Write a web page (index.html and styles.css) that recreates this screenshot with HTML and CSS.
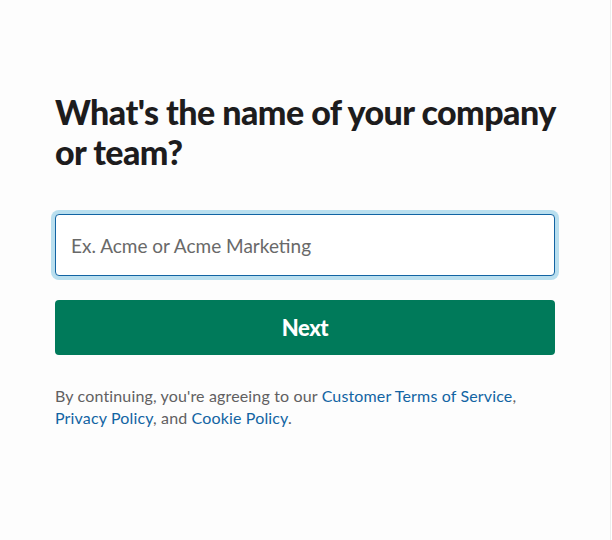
FILE: index.html
```html
<!DOCTYPE html>
<html lang="en">
<head>
<meta charset="utf-8">
<title>Create workspace</title>
<link rel="stylesheet" href="styles.css">
</head>
<body>
<div class="page">
  <main class="setup">
    <h1 class="title">What's the name of your company or team?</h1>
    <div class="field">
      <input class="name-input" type="text" placeholder="Ex. Acme or Acme Marketing">
    </div>
    <button class="next-btn" type="button">Next</button>
    <p class="legal">By continuing, you're agreeing to our <a href="#">Customer Terms of Service</a>, <a href="#">Privacy Policy</a>, and <a href="#">Cookie Policy</a>.</p>
  </main>
</div>
</body>
</html>
```
FILE: styles.css
```css
html, body {
  margin: 0;
  padding: 0;
  background: #ffffff;
}
body {
  font-family: Lato, "Liberation Sans", sans-serif;
  color: #1d1c1d;
}
.page {
  width: 611px;
  min-height: 540px;
  border-right: 1px solid #ececec;
  background: #fdfdfd;
  box-sizing: border-box;
}
.setup {
  width: 500px;
  padding: 92px 0 0 55px;
}
.title {
  margin: 0;
  font-size: 34px;
  line-height: 40px;
  font-weight: 900;
  letter-spacing: -0.55px;
  color: #1d1c1d;
}
.field {
  margin-top: 42px;
}
.name-input {
  display: block;
  box-sizing: border-box;
  width: 500px;
  height: 62px;
  margin: 0;
  padding: 0 15px;
  border: 1px solid #1264a3;
  border-radius: 4px;
  box-shadow: 0 0 0 4px rgba(29, 155, 209, 0.3);
  background: #fff;
  font-family: Lato, "Liberation Sans", sans-serif;
  font-size: 19px;
  color: #1d1c1d;
  outline: none;
}
.name-input::placeholder {
  color: #696969;
  opacity: 1;
}
.next-btn {
  display: block;
  width: 500px;
  height: 55px;
  margin-top: 24px;
  border: none;
  border-radius: 4px;
  background: #007a5a;
  color: #fff;
  font-family: Lato, "Liberation Sans", sans-serif;
  font-size: 22px;
  font-weight: 900;
  letter-spacing: -0.5px;
  cursor: pointer;
}
.legal {
  margin: 30px 0 0;
  font-size: 16px;
  line-height: 22px;
  letter-spacing: 0.15px;
  color: #616061;
}
.legal a {
  color: #1264a3;
  text-decoration: none;
}
```
